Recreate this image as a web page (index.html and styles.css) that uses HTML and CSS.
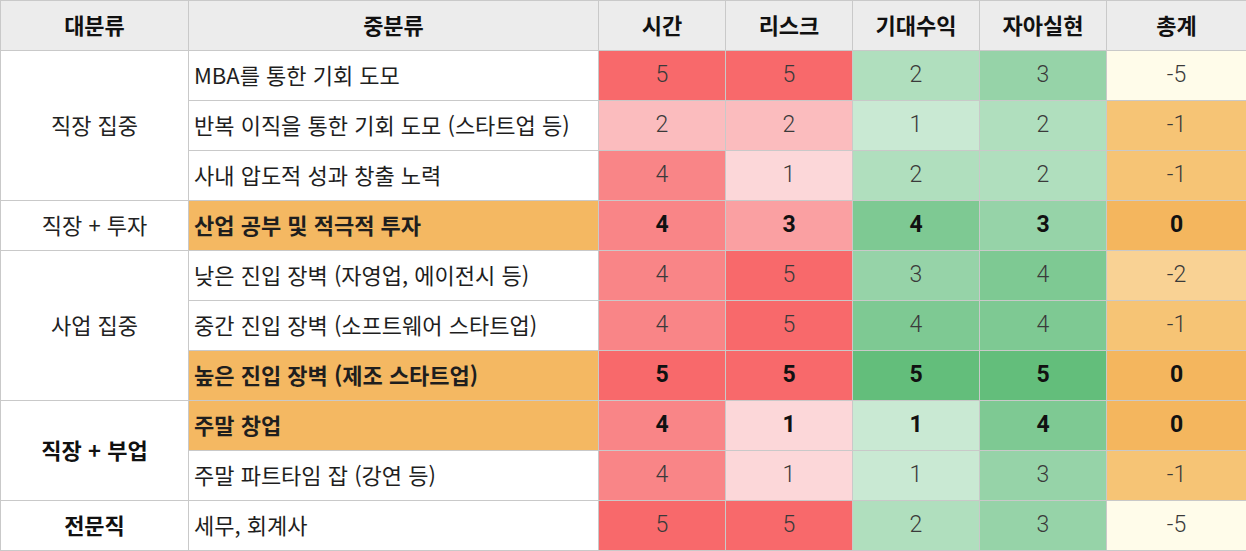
FILE: index.html
```html
<!DOCTYPE html>
<html lang="ko">
<head>
<meta charset="utf-8">
<link rel="stylesheet" href="styles.css">
</head>
<body>
<table class="grid">
  <colgroup>
    <col class="c-major"><col class="c-minor"><col class="c-num"><col class="c-num"><col class="c-num"><col class="c-num"><col class="c-total">
  </colgroup>
  <thead>
    <tr><th>대분류</th><th>중분류</th><th>시간</th><th>리스크</th><th>기대수익</th><th>자아실현</th><th>총계</th></tr>
  </thead>
  <tbody>
    <tr>
      <td class="major" rowspan="3">직장 집중</td>
      <td class="minor">MBA를 통한 기회 도모</td>
      <td class="num r5">5</td><td class="num r5">5</td><td class="num g2">2</td><td class="num g3">3</td><td class="num t5">-5</td>
    </tr>
    <tr>
      <td class="minor">반복 이직을 통한 기회 도모 (스타트업 등)</td>
      <td class="num r2">2</td><td class="num r2">2</td><td class="num g1">1</td><td class="num g2">2</td><td class="num t1">-1</td>
    </tr>
    <tr>
      <td class="minor">사내 압도적 성과 창출 노력</td>
      <td class="num r4">4</td><td class="num r1">1</td><td class="num g2">2</td><td class="num g2">2</td><td class="num t1">-1</td>
    </tr>
    <tr class="hl">
      <td class="major">직장 + 투자</td>
      <td class="minor">산업 공부 및 적극적 투자</td>
      <td class="num r4">4</td><td class="num r3">3</td><td class="num g4">4</td><td class="num g3">3</td><td class="num t0">0</td>
    </tr>
    <tr>
      <td class="major" rowspan="3">사업 집중</td>
      <td class="minor">낮은 진입 장벽 (자영업, 에이전시 등)</td>
      <td class="num r4">4</td><td class="num r5">5</td><td class="num g3">3</td><td class="num g4">4</td><td class="num t2">-2</td>
    </tr>
    <tr>
      <td class="minor">중간 진입 장벽 (소프트웨어 스타트업)</td>
      <td class="num r4">4</td><td class="num r5">5</td><td class="num g4">4</td><td class="num g4">4</td><td class="num t1">-1</td>
    </tr>
    <tr class="hl">
      <td class="minor">높은 진입 장벽 (제조 스타트업)</td>
      <td class="num r5">5</td><td class="num r5">5</td><td class="num g5">5</td><td class="num g5">5</td><td class="num t0">0</td>
    </tr>
    <tr class="hl">
      <td class="major strong" rowspan="2">직장 + 부업</td>
      <td class="minor">주말 창업</td>
      <td class="num r4">4</td><td class="num r1">1</td><td class="num g1">1</td><td class="num g4">4</td><td class="num t0">0</td>
    </tr>
    <tr>
      <td class="minor">주말 파트타임 잡 (강연 등)</td>
      <td class="num r4">4</td><td class="num r1">1</td><td class="num g1">1</td><td class="num g3">3</td><td class="num t1">-1</td>
    </tr>
    <tr>
      <td class="major strong">전문직</td>
      <td class="minor">세무, 회계사</td>
      <td class="num r5">5</td><td class="num r5">5</td><td class="num g2">2</td><td class="num g3">3</td><td class="num t5">-5</td>
    </tr>
  </tbody>
</table>
</body>
</html>
```

FILE: styles.css
```css
html, body {
  margin: 0;
  padding: 0;
  background: #ffffff;
}

.grid {
  border-collapse: collapse;
  table-layout: fixed;
  width: 1246px;
  font-family: "Noto Sans CJK KR", "Noto Sans", sans-serif;
  font-size: 22px;
  color: #1a1a1a;
}

.c-major { width: 188px; }
.c-minor { width: 410px; }
.c-num { width: 127px; }
.c-total { width: 140px; }

.grid th,
.grid td {
  border: 1px solid #c9c9c9;
  height: 50px;
  padding: 0 0 3px 0;
  box-sizing: border-box;
  line-height: 26px;
}

.grid th {
  background: #ececec;
  font-weight: 700;
  color: #111;
  text-align: center;
}

.major {
  text-align: center;
  font-weight: 400;
  color: #222;
}

.major.strong {
  font-weight: 700;
  color: #111;
}

.grid td.minor {
  text-align: left;
  padding-left: 5px;
  white-space: nowrap;
  color: #1e1e1e;
}

.grid td.num {
  text-align: center;
  font-family: Roboto, "Noto Sans", sans-serif;
  font-size: 23px;
  font-weight: 300;
  color: #3a3a3a;
  padding-bottom: 1px;
}

.hl .minor {
  background: #f4b862;
  font-weight: 700;
  color: #111;
}

.grid .hl td.num {
  font-weight: 700;
  color: #111;
}

.r5 { background: #f8696b; }
.r4 { background: #f98587; }
.r3 { background: #faa0a2; }
.r2 { background: #fbbcbe; }
.r1 { background: #fcd7d9; }

.g5 { background: #63be7b; }
.g4 { background: #7ec993; }
.g3 { background: #96d3a8; }
.g2 { background: #b0dfbe; }
.g1 { background: #c9e9d3; }

.t0 { background: #f4b65e; }
.t1 { background: #f6c475; }
.t2 { background: #f9d294; }
.t5 { background: #fffcea; }
```
